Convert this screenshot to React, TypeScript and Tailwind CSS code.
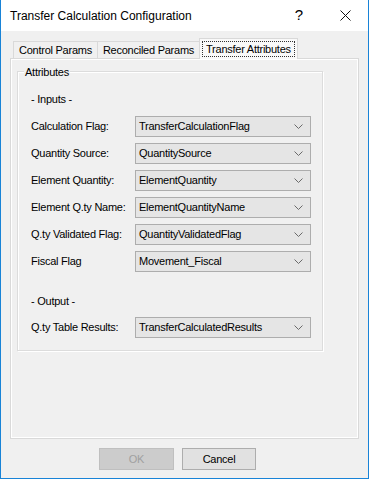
const inputs = [
  { label: "Calculation Flag:", value: "TransferCalculationFlag" },
  { label: "Quantity Source:", value: "QuantitySource" },
  { label: "Element Quantity:", value: "ElementQuantity" },
  { label: "Element Q.ty Name:", value: "ElementQuantityName" },
  { label: "Q.ty Validated Flag:", value: "QuantityValidatedFlag" },
  { label: "Fiscal Flag", value: "Movement_Fiscal" },
];

const tabs = ["Control Params", "Reconciled Params", "Transfer Attributes"];

function Chevron() {
  return (
    <svg width="9" height="5" viewBox="0 0 9 5">
      <path d="M0.5 0.5 L4.5 4.5 L8.5 0.5" fill="none" stroke="#6a6a6a" strokeWidth="1" />
    </svg>
  );
}

function Combo({ value }: { value: string }) {
  return (
    <div className="flex h-[21px] w-[176px] items-center justify-between border border-[#adadad] bg-[#e5e5e5] pl-[3px] pr-[7px]">
      <span>{value}</span>
      <Chevron />
    </div>
  );
}

function Row({ label, value }: { label: string; value: string }) {
  return (
    <div className="flex h-[27px] items-center">
      <span className="w-[104px]">{label}</span>
      <Combo value={value} />
    </div>
  );
}

export default function App() {
  return (
    <div className="flex h-[479px] w-[369px] flex-col border border-t-0 border-[#1883d7] bg-[#f0f0f0] font-['Liberation_Sans',Arial,sans-serif] text-[11px] tracking-[-0.25px] text-black">
      {/* Title bar */}
      <div className="flex h-[31px] items-center bg-white pl-[9px] tracking-normal">
        <span className="flex-1 text-[12px]">Transfer Calculation Configuration</span>
        <span className="w-[46px] text-center text-[15px]">?</span>
        <span className="flex w-[46px] items-center justify-center">
          <svg width="11" height="11" viewBox="0 0 11 11">
            <path d="M0.5 0.5 L10.5 10.5 M10.5 0.5 L0.5 10.5" stroke="#111" strokeWidth="1" />
          </svg>
        </span>
      </div>

      <div className="flex flex-1 flex-col px-[9px] pt-[8px]">
        {/* Tabs */}
        <div className="flex h-[19px] items-end pl-[3px]">
          {tabs.map((t, i) => {
            const active = i === tabs.length - 1;
            return active ? (
              <div
                key={t}
                className="relative z-10 -mb-px flex h-[21px] items-center border border-b-0 border-[#d9d9d9] bg-[#f9f9f9] px-[2px]"
              >
                <span className="border border-dotted border-[#333] px-[3px] leading-[14px]">{t}</span>
              </div>
            ) : (
              <div
                key={t}
                className="-mr-px flex h-[17px] items-center border border-b-0 border-[#d9d9d9] bg-[#f0f0f0] px-[5px]"
              >
                {t}
              </div>
            );
          })}
        </div>

        {/* Tab panel */}
        <div className="flex h-[381px] flex-col border border-[#d9d9d9] bg-[#f0f0f0] px-[6px] pt-[3px] shadow-[inset_1px_1px_0_#fff,inset_-1px_-1px_0_#fff]">
          <div className="pt-[9px]">
            {/* Group box */}
            <div className="relative h-[280px] w-[306px] border border-[#dcdcdc] shadow-[inset_1px_1px_0_#fff,1px_1px_0_#fff]">
              <span className="absolute -top-[8px] left-[6px] bg-[#f0f0f0] px-[1px]">Attributes</span>
              <div className="pl-[13px] pt-[19px]">
                <div className="flex h-[16px] items-center">- Inputs -</div>
                <div className="mt-[6px]">
                  {inputs.map((r) => (
                    <Row key={r.label} label={r.label} value={r.value} />
                  ))}
                </div>
                <div className="mt-[18px] flex h-[16px] items-center">- Output -</div>
                <div className="mt-[5px]">
                  <Row label="Q.ty Table Results:" value="TransferCalculatedResults" />
                </div>
              </div>
            </div>
          </div>
        </div>

        {/* Buttons */}
        <div className="flex gap-[8px] pl-[89px] pt-[9px]">
          <div className="flex h-[22px] w-[75px] items-center justify-center border border-[#bfbfbf] bg-[#cccccc] text-[#a0a0a0]">
            OK
          </div>
          <div className="flex h-[22px] w-[74px] items-center justify-center border border-[#adadad] bg-[#e1e1e1]">
            Cancel
          </div>
        </div>
      </div>
    </div>
  );
}
